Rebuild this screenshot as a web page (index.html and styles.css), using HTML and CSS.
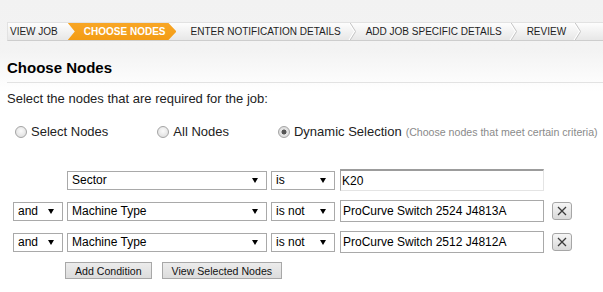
FILE: index.html
```html
<!DOCTYPE html>
<html lang="en">
<head>
  <meta charset="UTF-8">
  <title>Choose Nodes</title>
  <link rel="stylesheet" href="styles.css">
</head>
<body>
  <div class="page">
    <ul class="crumbs">
      <li class="crumb crumb-first">View Job</li>
      <li class="crumb crumb-current">Choose Nodes</li>
      <li class="crumb crumb-after">Enter Notification Details<svg class="sep" width="8" height="17" viewBox="0 0 8 17"><polyline points="0.5,-1 6.5,8.5 0.5,18" fill="none" stroke="#ffffff" stroke-width="1.2"/><polyline points="1.6,-1 7.6,8.5 1.6,18" fill="none" stroke="#c4c4c4" stroke-width="1"/></svg></li>
      <li class="crumb">Add Job Specific Details<svg class="sep" width="8" height="17" viewBox="0 0 8 17"><polyline points="0.5,-1 6.5,8.5 0.5,18" fill="none" stroke="#ffffff" stroke-width="1.2"/><polyline points="1.6,-1 7.6,8.5 1.6,18" fill="none" stroke="#c4c4c4" stroke-width="1"/></svg></li>
      <li class="crumb">Review<svg class="sep" width="8" height="17" viewBox="0 0 8 17"><polyline points="0.5,-1 6.5,8.5 0.5,18" fill="none" stroke="#ffffff" stroke-width="1.2"/><polyline points="1.6,-1 7.6,8.5 1.6,18" fill="none" stroke="#c4c4c4" stroke-width="1"/></svg></li>
    </ul>

    <h2 class="title">Choose Nodes</h2>

    <p class="intro">Select the nodes that are required for the job:</p>

    <div class="modes">
      <label class="mode"><input type="radio" name="mode"> Select Nodes</label>
      <label class="mode"><input type="radio" name="mode"> All Nodes</label>
      <label class="mode"><input type="radio" name="mode" checked> Dynamic Selection <span class="hint">(Choose nodes that meet certain criteria)</span></label>
    </div>

    <div class="conditions">
      <div class="cond">
        <span class="join-empty"></span>
        <span class="select select-field"><select><option>Sector</option><option>Machine Type</option></select></span>
        <span class="select select-op"><select><option>is</option><option>is not</option></select></span>
        <input class="value value-first" type="text" value="K20">
      </div>
      <div class="cond">
        <span class="select select-join"><select><option>and</option><option>or</option></select></span>
        <span class="select select-field"><select><option>Machine Type</option><option>Sector</option></select></span>
        <span class="select select-op"><select><option>is not</option><option>is</option></select></span>
        <input class="value" type="text" value="ProCurve Switch 2524 J4813A">
        <button class="remove" type="button"><svg width="10" height="10" viewBox="0 0 10 10"><path d="M1 1 L9 9 M9 1 L1 9" stroke="#3a3a3a" stroke-width="1.3"/></svg></button>
      </div>
      <div class="cond">
        <span class="select select-join"><select><option>and</option><option>or</option></select></span>
        <span class="select select-field"><select><option>Machine Type</option><option>Sector</option></select></span>
        <span class="select select-op"><select><option>is not</option><option>is</option></select></span>
        <input class="value" type="text" value="ProCurve Switch 2512 J4812A">
        <button class="remove" type="button"><svg width="10" height="10" viewBox="0 0 10 10"><path d="M1 1 L9 9 M9 1 L1 9" stroke="#3a3a3a" stroke-width="1.3"/></svg></button>
      </div>
    </div>

    <div class="actions">
      <button class="btn" type="button">Add Condition</button>
      <button class="btn" type="button">View Selected Nodes</button>
    </div>
  </div>
</body>
</html>
```

FILE: styles.css
```css
html { overflow: hidden; }
body {
  margin: 0; font-family: Arial, "Liberation Sans", sans-serif; color: #222;
  background: #fff linear-gradient(#f2f2f2 0, #f3f3f3 50px, #fff 92px) no-repeat;
}
.page { padding: 22px 0 0 7px; }

/* steps bar */
.crumbs {
  display: flex; margin: 0; padding: 0; list-style: none; height: 17px;
  border: 1px solid #e2e2e2; border-right: none; border-bottom-color: #cdcdcd;
  background: linear-gradient(#fdfdfd, #e7e7e7); overflow: hidden;
}
.crumb {
  display: flex; align-items: center; gap: 7px; padding-left: 10px;
  font-size: 10px; text-transform: uppercase; color: #1e1e1e; white-space: nowrap;
}
.crumb-first { padding-left: 2px; padding-right: 10px; }
.crumb-current {
  padding: 0 11px 0 16px; color: #fff; font-weight: bold;
  background: linear-gradient(#f8a626, #f39c14);
  clip-path: polygon(0 0, calc(100% - 8px) 0, 100% 50%, calc(100% - 8px) 100%, 0 100%, 7px 50%);
}
.crumb-after { padding-left: 14px; }
.sep { display: block; }

.title {
  margin: 0; padding: 18px 0 5px; font-size: 15px; line-height: 18px;
  color: #000; border-bottom: 1px solid #e2e2e2;
}
.intro { margin: 8px 0 0; font-size: 13px; line-height: 16px; }

/* mode radios */
.modes { display: flex; margin-top: 17px; padding-left: 8px; font-size: 13px; line-height: 16px; }
.mode { display: flex; align-items: center; margin-right: 49px; white-space: nowrap; }
.mode:last-child { margin-right: 0; }
.mode input {
  appearance: none; width: 12px; height: 12px; margin: 0 4px 0 0;
  border: 1px solid #a4a4a4; border-radius: 50%;
  background: radial-gradient(circle at 50% 40%, #fbfbfb, #d9d9d9);
}
.mode input:checked { background: radial-gradient(circle, #555 0 2.2px, #e6e6e6 2.8px, #d4d4d4); }
.hint { margin-left: 4px; font-size: 10.6px; color: #8a8a8a; }

/* conditions */
.conditions { margin-top: 29px; padding-left: 6px; }
.cond { display: flex; align-items: center; height: 22px; margin-bottom: 9px; }
.join-empty { width: 50px; margin-right: 4px; }
.select { position: relative; display: block; }
.select select {
  appearance: none; display: block; width: 100%; height: 19px; margin: 0;
  padding: 0 0 0 4px; border: 1px solid #a9a9a9; border-radius: 0;
  background: #fff; font: 12px Arial, "Liberation Sans", sans-serif; color: #000;
}
.select::after {
  content: ""; position: absolute; right: 9px; top: 7px;
  border-left: 3px solid transparent; border-right: 3px solid transparent;
  border-top: 5px solid #000;
}
.select-join { width: 50px; margin-right: 4px; }
.select-field { width: 200px; margin-right: 4px; }
.select-op { width: 64px; margin-right: 5px; }
.value {
  box-sizing: border-box; width: 204px; height: 22px; margin: 0 8px 0 0; padding: 0 2px;
  border: 1px solid #a9a9a9; font: 12px Arial, "Liberation Sans", sans-serif; color: #000;
}
.value-first {
  padding-left: 1px;
  border-width: 2px 1px 1px 1px; border-color: #9c9c9c #e4e4e4 #e4e4e4 #a4a4a4;
}
.remove {
  display: flex; align-items: center; justify-content: center;
  box-sizing: border-box; width: 20px; height: 18px; padding: 0;
  border: 1px solid #a6a6a6; border-radius: 3px;
  background: linear-gradient(#f6f6f6, #d9d9d9);
}

.actions { display: flex; gap: 10px; padding-left: 58px; }
.btn {
  height: 17px; padding: 0 9px; font: 10.6px Arial, "Liberation Sans", sans-serif; color: #111;
  border: 1px solid #a8a8a8; border-radius: 0; background: linear-gradient(#ececec, #dcdcdc);
}
```
